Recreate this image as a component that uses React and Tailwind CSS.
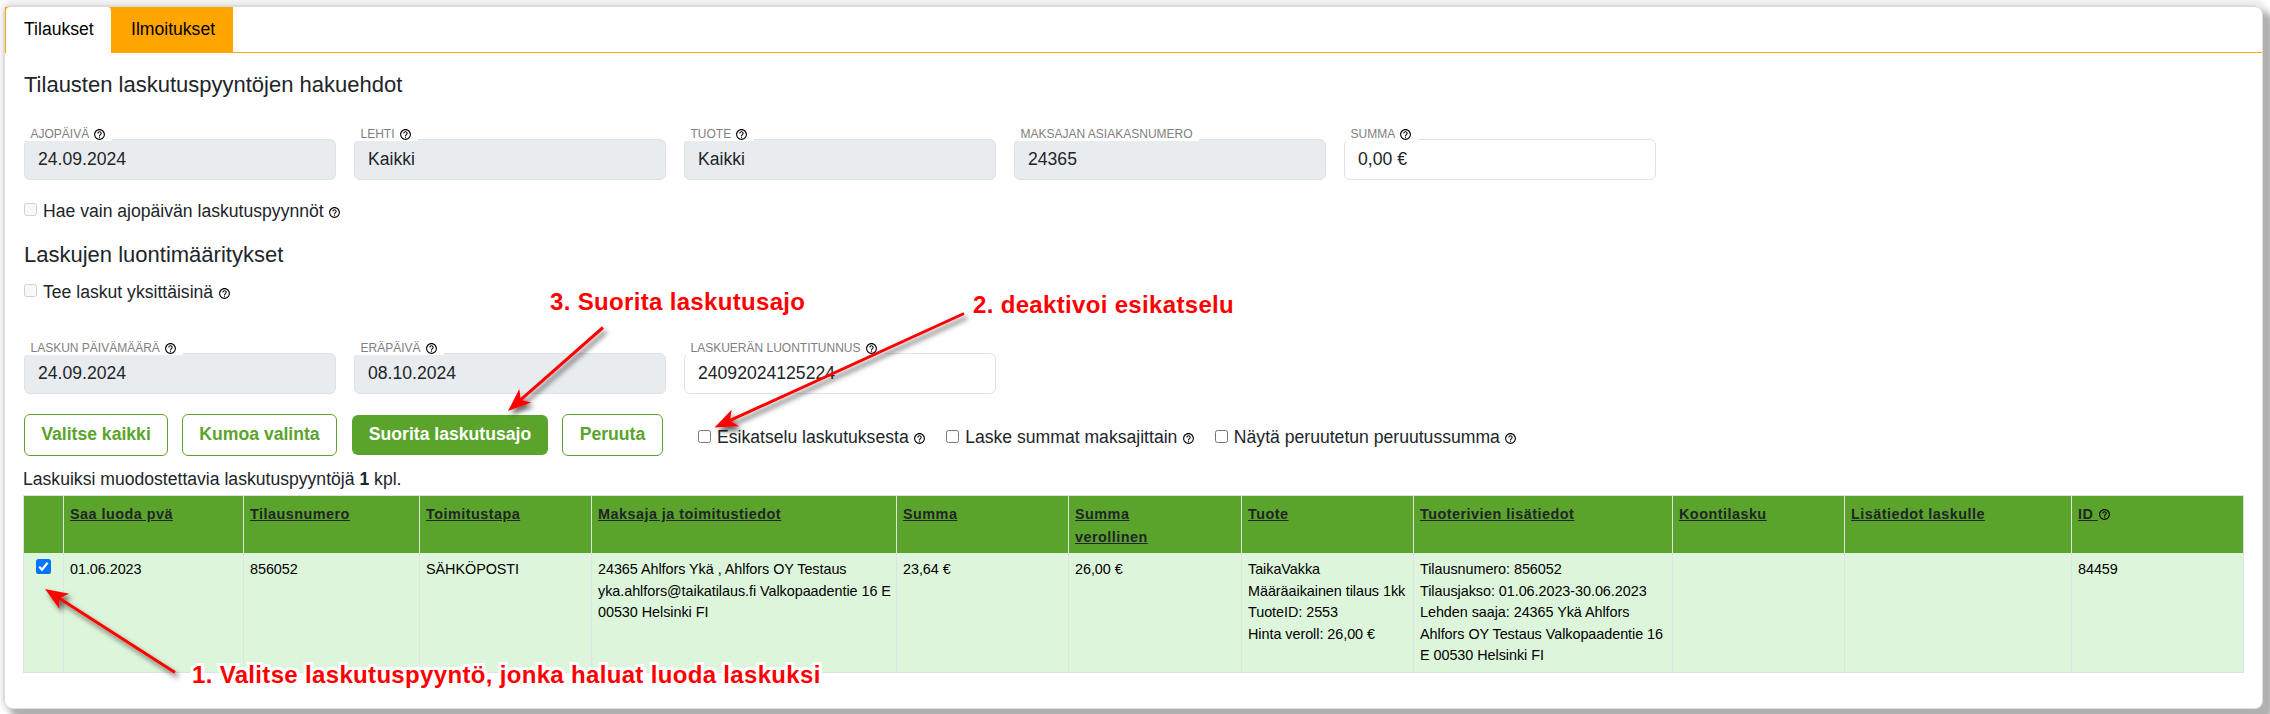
import { MdHelpOutline } from "react-icons/md";

const searchFields = [
  { label: "AJOPÄIVÄ", value: "24.09.2024", help: true, disabled: true },
  { label: "LEHTI", value: "Kaikki", help: true, disabled: true },
  { label: "TUOTE", value: "Kaikki", help: true, disabled: true },
  { label: "MAKSAJAN ASIAKASNUMERO", value: "24365", disabled: true },
  { label: "SUMMA", value: "0,00 €", help: true },
];

const creationFields = [
  { label: "LASKUN PÄIVÄMÄÄRÄ", value: "24.09.2024", help: true, disabled: true },
  { label: "ERÄPÄIVÄ", value: "08.10.2024", help: true, disabled: true },
  { label: "LASKUERÄN LUONTITUNNUS", value: "24092024125224", help: true },
];

const columns = [
  { title: "Saa luoda pvä", lines: ["01.06.2023"] },
  { title: "Tilausnumero", lines: ["856052"] },
  { title: "Toimitustapa", lines: ["SÄHKÖPOSTI"] },
  {
    title: "Maksaja ja toimitustiedot",
    lines: [
      "24365 Ahlfors Ykä , Ahlfors OY Testaus",
      "yka.ahlfors@taikatilaus.fi Valkopaadentie 16 E",
      "00530 Helsinki FI",
    ],
  },
  { title: "Summa", lines: ["23,64 €"] },
  { title: "Summa\nverollinen", lines: ["26,00 €"] },
  {
    title: "Tuote",
    lines: ["TaikaVakka", "Määräaikainen tilaus 1kk", "TuoteID: 2553", "Hinta veroll: 26,00 €"],
  },
  {
    title: "Tuoterivien lisätiedot",
    lines: [
      "Tilausnumero: 856052",
      "Tilausjakso: 01.06.2023-30.06.2023",
      "Lehden saaja: 24365 Ykä Ahlfors",
      "Ahlfors OY Testaus Valkopaadentie 16",
      "E 00530 Helsinki FI",
    ],
  },
  { title: "Koontilasku", lines: [] },
  { title: "Lisätiedot laskulle", lines: [] },
  { title: "ID", lines: ["84459"], help: true },
];

const gridCols =
  "grid grid-cols-[40px_180px_176px_172px_305px_172px_173px_172px_259px_172px_227px_172px]";

function Help({ className = "" }) {
  return <MdHelpOutline className={"size-[13px] shrink-0 text-black " + className} />;
}

function Field({ label, value, help, disabled }) {
  return (
    <div className="relative w-[312px]">
      <div
        className={
          "flex h-[41px] items-center rounded-md border border-[#dee2e6] pl-[13px] text-[17.6px] text-[#212529] " +
          (disabled ? "bg-[#e9ecef]" : "bg-white")
        }
      >
        {value}
      </div>
      <div className="absolute -top-[14px] left-0.5 flex h-4 items-center gap-1 bg-white pt-0.5 pr-[6px] pl-[4.5px] text-xs whitespace-nowrap text-[#808080]">
        {label}
        {help && <Help />}
      </div>
    </div>
  );
}

function Check({ label, disabled }) {
  return (
    <label className="flex h-6 items-center text-[17.6px] whitespace-nowrap text-[#212529]">
      <span
        className={
          "mr-[6px] mb-[3px] size-[13px] shrink-0 rounded-[2.5px] border " +
          (disabled ? "border-[#d1d1d1] bg-[#f8f8f8]" : "border-[#767676] bg-white")
        }
      />
      {label}
      <Help className="mt-0.5 ml-[4.5px]" />
    </label>
  );
}

function Button({ children, primary, className = "" }) {
  return (
    <button
      type="button"
      className={
        "flex items-center justify-center rounded-md pb-px text-[17.6px] font-bold whitespace-nowrap " +
        (primary
          ? "h-10 bg-[#5aa42b] text-white "
          : "h-[42px] border border-[#5aa42b] bg-white text-[#5aa42b] ") +
        className
      }
    >
      {children}
    </button>
  );
}

function Arrow({ from, to }) {
  const dx = to[0] - from[0];
  const dy = to[1] - from[1];
  const len = Math.hypot(dx, dy);
  const angle = (Math.atan2(dy, dx) * 180) / Math.PI;
  return (
    <g filter="url(#arrow-shadow)">
      <g transform={`translate(${from[0]} ${from[1]}) rotate(${angle})`} fill="#ff0000">
        <path d={`M0 -1.5 L${len - 16} -1.5 V1.5 H0 Z`} />
        <path d={`M${len} 0 L${len - 23} -9 L${len - 17} 0 L${len - 23} 9 Z`} />
      </g>
    </g>
  );
}

function Note({ children, className }) {
  return (
    <div
      className={
        "absolute text-2xl leading-6 font-bold tracking-[0.33px] whitespace-nowrap text-[#ff0000] [paint-order:stroke_fill] [-webkit-text-stroke:6px_white] " +
        className
      }
    >
      {children}
    </div>
  );
}

export default function App() {
  return (
    <div className="relative h-[714px] w-[2270px] overflow-hidden bg-white pt-[7px] pl-[5px] font-['Liberation_Sans',Arial,sans-serif]">
      <main className="h-[702px] w-[2258px] rounded-lg border-r border-b border-[#dddddd] bg-white shadow-[-2px_-2px_1px_#dcdcdc,8px_8px_6px_3px_#b0b0b0,0_-2px_4px_5px_#ececec]">
        <nav className="flex h-[46px] border-b border-[#ffa500] text-[17.6px] text-black">
          <div className="flex h-[46px] w-[228px] bg-[#ffa500] pl-px">
            <div className="flex w-[105px] items-center rounded-t bg-white pb-px pl-[18px]">Tilaukset</div>
            <div className="flex items-center pb-px pl-5">Ilmoitukset</div>
          </div>
        </nav>

        <div className="flex flex-col pl-[19px]">
          <h2 className="mt-[18px] h-[28px] text-[22px] leading-[28px] text-[#212529]">
            Tilausten laskutuspyyntöjen hakuehdot
          </h2>
          <div className="mt-10 flex gap-[18px]">
            {searchFields.map((f) => (
              <Field key={f.label} {...f} />
            ))}
          </div>
          <div className="mt-[19px]">
            <Check label="Hae vain ajopäivän laskutuspyynnöt" disabled />
          </div>
          <h2 className="mt-[18px] h-[28px] text-[22px] leading-[28px] text-[#212529]">
            Laskujen luontimääritykset
          </h2>
          <div className="mt-[11px]">
            <Check label="Tee laskut yksittäisinä" disabled />
          </div>
          <div className="mt-[49px] flex gap-[18px]">
            {creationFields.map((f) => (
              <Field key={f.label} {...f} />
            ))}
          </div>

          <div className="mt-5 flex h-[42px] items-center">
            <Button className="w-[144px]">Valitse kaikki</Button>
            <Button className="ml-[14px] w-[155px]">Kumoa valinta</Button>
            <Button primary className="ml-[15px] w-[196px]">
              Suorita laskutusajo
            </Button>
            <Button className="ml-[14px] w-[101px]">Peruuta</Button>
            <div className="mt-[5px] ml-[35px] flex gap-5">
              <Check label="Esikatselu laskutuksesta" />
              <Check label="Laske summat maksajittain" />
              <Check label="Näytä peruutetun peruutussumma" />
            </div>
          </div>

          <p className="-ml-px mt-[11px] h-7 text-[17.6px] leading-[24px] text-[#212529]">
            Laskuiksi muodostettavia laskutuspyyntöjä <b>1</b> kpl.
          </p>

          <div className="-ml-px w-[2221px] border-t border-l border-[#dee2e6]">
            <div className={gridCols + " h-[57px] bg-[#5aa42b]"}>
              <div className="border-r border-[#dee2e6]" />
              {columns.map((c) => (
                <div
                  key={c.title}
                  className="border-r border-[#dee2e6] pt-[7px] pl-[6px] text-[14.4px] leading-[23px] font-bold tracking-[0.48px] whitespace-pre-line text-[#212529]"
                >
                  <span className="underline">
                    {c.title}
                    {c.help && "\u00a0"}
                  </span>
                  {c.help && <Help className="mb-0.5 inline" />}
                </div>
              ))}
            </div>
            <div className={gridCols + " h-[120px] border-b border-[#dee2e6] bg-[#ddf6db]"}>
              <div className="border-r border-[#dee2e6] pt-[6px] pl-3">
                <div className="flex size-[15px] items-center justify-center rounded-[2.5px] bg-[#0075ff]">
                  <svg viewBox="0 0 15 15" className="size-[15px]">
                    <path d="M3.2 7.8 L6 10.6 L11.6 3.8" fill="none" stroke="#fff" strokeWidth="2.2" />
                  </svg>
                </div>
              </div>
              {columns.map((c) => (
                <div
                  key={c.title}
                  className="border-r border-[#dee2e6] pt-[6px] pl-[6px] text-[14.4px] leading-[21.6px] tracking-[-0.05px] whitespace-nowrap text-black"
                >
                  {c.lines.map((l) => (
                    <div key={l}>{l}</div>
                  ))}
                </div>
              ))}
            </div>
          </div>
        </div>
      </main>

      <svg className="pointer-events-none absolute inset-0" width="2270" height="714" viewBox="0 0 2270 714">
        <defs>
          <filter id="arrow-shadow" x="-20%" y="-20%" width="140%" height="140%">
            <feDropShadow dx="3" dy="4" stdDeviation="2.5" floodColor="#000" floodOpacity="0.6" />
          </filter>
        </defs>
        <Arrow from={[175, 672.5]} to={[45, 589]} />
        <Arrow from={[964, 313.5]} to={[714.5, 427.5]} />
        <Arrow from={[603, 327.5]} to={[508, 411]} />
      </svg>
      <Note className="top-[290px] left-[550px]">3. Suorita laskutusajo</Note>
      <Note className="top-[293px] left-[973px]">2. deaktivoi esikatselu</Note>
      <Note className="top-[663px] left-[192px]">1. Valitse laskutuspyyntö, jonka haluat luoda laskuksi</Note>
    </div>
  );
}
